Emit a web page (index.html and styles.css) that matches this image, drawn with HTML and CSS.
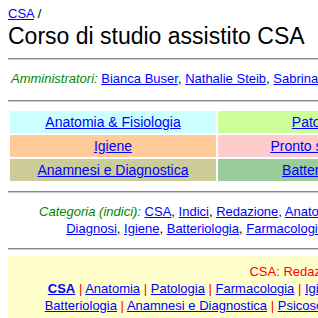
FILE: index.html
```html
<!DOCTYPE html>
<html lang="it">
<head>
  <meta charset="UTF-8">
  <title>Corso di studio assistito CSA</title>
  <link rel="stylesheet" href="styles.css">
</head>
<body>

<div class="crumb"><a href="#">CSA</a> /</div>
<h1>Corso di studio assistito CSA</h1>
<hr>

<p class="admins">
  <span class="label">Amministratori:</span>
  <a href="#">Bianca Buser</a>, <a href="#">Nathalie Steib</a>, <a href="#">Sabrina Keller</a>
</p>
<hr>

<table class="areas">
  <tr>
    <td class="c-cyan"><a href="#">Anatomia &amp; Fisiologia</a></td>
    <td class="c-lime"><a href="#">Patologia</a></td>
    <td class="c-lilac"><a href="#">Farmacologia</a></td>
  </tr>
  <tr>
    <td class="c-orange"><a href="#">Igiene</a></td>
    <td class="c-pink"><a href="#">Pronto soccorso</a></td>
    <td class="c-yellow"><a href="#">Psicosomatica</a></td>
  </tr>
  <tr>
    <td class="c-khaki"><a href="#">Anamnesi e Diagnostica</a></td>
    <td class="c-green"><a href="#">Batteriologia</a></td>
    <td class="c-grey"><a href="#">Microbiologia</a></td>
  </tr>
</table>
<hr>

<p class="cats">
  <span class="label">Categoria (indici):</span>
  <a href="#">CSA</a>, <a href="#">Indici</a>, <a href="#">Redazione</a>, <a href="#">Anatomia</a>, <a href="#">Fisiologia</a>, <a href="#">Patologia</a>, <a href="#">Pronto soccorso</a>, <a href="#">Cute</a>,<br>
  <a href="#">Diagnosi</a>, <a href="#">Igiene</a>, <a href="#">Batteriologia</a>, <a href="#">Farmacologia</a>, <a href="#">Microbiologia</a>, <a href="#">Psicosomatica</a>, <a href="#">Ginecologia</a>
</p>
<hr>

<div class="navbox">
  <div class="nav-title">CSA: Redazione e autori</div>
  <div class="nav-links">
    <a href="#"><b>CSA</b></a> <span class="sep">|</span> <a href="#">Anatomia</a> <span class="sep">|</span> <a href="#">Patologia</a> <span class="sep">|</span> <a href="#">Farmacologia</a> <span class="sep">|</span> <a href="#">Igiene</a> <span class="sep">|</span> <a href="#">Pronto soccorso</a> <span class="sep">|</span> <a href="#">Microbiologia</a> <span class="sep">|</span> <a href="#">Pediatria</a><br>
    <a href="#">Batteriologia</a> <span class="sep">|</span> <a href="#">Anamnesi e Diagnostica</a> <span class="sep">|</span> <a href="#">Psicosomatica</a> <span class="sep">|</span> <a href="#">Ginecologia</a> <span class="sep">|</span> <a href="#">Oftalmologia</a> <span class="sep">|</span> <a href="#">Redazione</a>
  </div>
</div>

</body>
</html>
```

FILE: styles.css
```css
html {
  overflow: hidden;
}
body {
  margin: 8px;
  width: 626px;
  font-family: 'Liberation Sans', Arial, sans-serif;
  font-size: 13px;
  color: #000;
  background: #fff;
}
a {
  color: #00f;
}
hr {
  height: 0;
  margin: 0;
  border: 0;
  border-top: 1px solid #888;
  border-bottom: 1px solid #ccc;
}
.label {
  color: #080;
  font-style: italic;
}

.crumb {
  line-height: 11px;
}
h1 {
  margin: 3px 0 8px;
  font-size: 23px;
  font-weight: normal;
  line-height: 28px;
}

.admins {
  margin: 10px 0 13px;
  padding-left: 3px;
  line-height: 17px;
}

.areas {
  width: 100%;
  margin: 7px 0 8px;
  border-collapse: separate;
  border-spacing: 2px;
  table-layout: fixed;
}
.areas td {
  padding: 3px;
  text-align: center;
  font-size: 14px;
  line-height: 16px;
}
.c-cyan { background: #ccffff; }
.c-lime { background: #ccff99; }
.c-lilac { background: #ccccff; }
.c-orange { background: #ffcc99; }
.c-pink { background: #ffcccc; }
.c-yellow { background: #ffff99; }
.c-khaki { background: #cccc99; }
.c-green { background: #99cc99; }
.c-grey { background: #dddddd; }

.cats {
  margin: 10px 0 11px;
  text-align: center;
  line-height: 17px;
}

.navbox {
  margin-top: 6px;
  padding: 7px 0 6px;
  background: #ffffcc;
  text-align: center;
  line-height: 17px;
}
.nav-title {
  color: #f00;
}
.sep {
  color: #f00;
}
```
